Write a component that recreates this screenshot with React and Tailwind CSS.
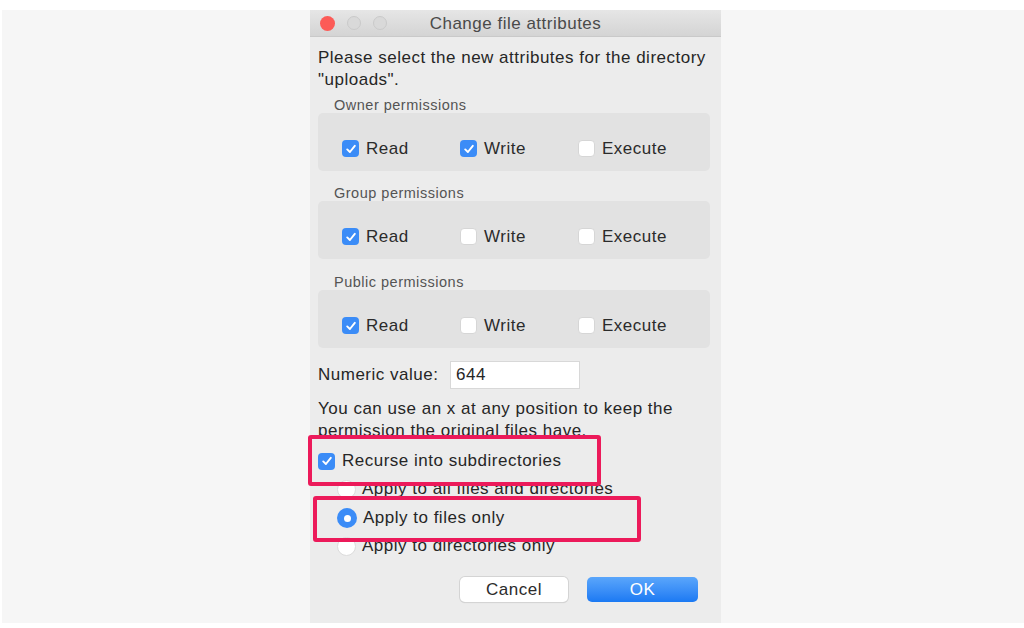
import React from 'react';

const font = { fontFamily: '"Liberation Sans", Arial, sans-serif' };

function Check({ on }) {
    if (!on) {
        return <span className="w-[17px] h-[17px] rounded-[4px] bg-white border border-[#d6d6d6] shrink-0" />;
    }
    return (
        <span className="w-[17px] h-[17px] rounded-[4px] bg-[#3b8cf7] flex items-center justify-center shrink-0">
            <svg width="12" height="12" viewBox="0 0 12 12">
                <path d="M2.2 6.4 L4.9 9 L9.8 2.8" fill="none" stroke="white" strokeWidth="1.9" strokeLinecap="round" strokeLinejoin="round" />
            </svg>
        </span>
    );
}

function Radio({ on }) {
    if (!on) {
        return <span className="w-[19px] h-[19px] rounded-full bg-white border border-[#dcdcdc] shrink-0" />;
    }
    return (
        <span className="w-[20px] h-[20px] rounded-full bg-[#3b8cf7] flex items-center justify-center shrink-0">
            <span className="w-[7px] h-[7px] rounded-full bg-white" />
        </span>
    );
}

function PermGroup({ label, read, write, exec, gap }) {
    const items = [
        ['Read', read],
        ['Write', write],
        ['Execute', exec],
    ];
    return (
        <div className={gap}>
            <div className="ml-[16px] text-[14.5px] leading-[16px] text-[#545454]">{label}</div>
            <div className="w-[392px] h-[58px] rounded-[5px] bg-[#e2e2e2] pt-[13px] pl-[24px] flex items-center">
                {items.map(([name, on]) => (
                    <div key={name} className="w-[118px] flex items-center gap-[7px] text-[17px] text-[#2b2b2b]">
                        <Check on={on} />
                        <span>{name}</span>
                    </div>
                ))}
            </div>
        </div>
    );
}

export default function App() {
    return (
        <div className="w-[1024px] h-[628px] bg-white pt-[10px] overflow-hidden tracking-[0.5px]" style={font}>
            <div className="ml-[2px] h-[613px] bg-[#f6f6f6] pl-[308px]">
                {/* ventana */}
                <div className="relative w-[411px] h-[613px] bg-[#ececec] flex flex-col">
                    <div className="h-[27px] bg-gradient-to-b from-[#e6e6e6] to-[#d4d4d4] border-b border-[#c9c9c9] flex items-center px-[10px]">
                        <div className="w-[80px] flex items-center gap-[12px]">
                            <span className="w-[15px] h-[15px] rounded-full bg-[#fc5b57]" />
                            <span className="w-[14px] h-[14px] rounded-full bg-[#d9d9d9] border border-[#cacaca]" />
                            <span className="w-[14px] h-[14px] rounded-full bg-[#d9d9d9] border border-[#cacaca]" />
                        </div>
                        <div className="flex-1 text-center text-[17px] text-[#4a4a4a] pt-[1px]">Change file attributes</div>
                        <div className="w-[80px]" />
                    </div>

                    <div className="px-[8px] pt-[10px] text-[#262626]">
                        <p className="text-[17px] leading-[22px] whitespace-nowrap">
                            Please select the new attributes for the directory
                            <br />
                            "uploads".
                        </p>

                        <PermGroup label="Owner permissions" read write gap="mt-[6px]" />
                        <PermGroup label="Group permissions" read gap="mt-[14px]" />
                        <PermGroup label="Public permissions" read gap="mt-[15px]" />

                        <div className="mt-[13px] flex items-center">
                            <span className="w-[132px] text-[17px]">Numeric value:</span>
                            <div className="w-[130px] h-[28px] bg-white border border-[#d8d8d8] flex items-center px-[5px] text-[17px]">644</div>
                        </div>

                        <p className="mt-[9px] text-[17px] leading-[22px] whitespace-nowrap">You can use an x at any position to keep the</p>
                        <div className="h-[15px] overflow-hidden">
                            <p className="text-[17px] leading-[22px]">permission the original files have.</p>
                        </div>

                        <div className="mt-[12px] h-[28px] flex items-center gap-[7px] text-[17px]">
                            <Check on />
                            <span>Recurse into subdirectories</span>
                        </div>
                        <div className="h-[21px] overflow-hidden">
                            <div className="h-[28px] pl-[19px] flex items-center gap-[6px] text-[17px]">
                                <Radio />
                                <span>Apply to all files and directories</span>
                            </div>
                        </div>
                        <div className="mt-[8px] h-[28px] pl-[19px] flex items-center gap-[6px] text-[17px]">
                            <Radio on />
                            <span>Apply to files only</span>
                        </div>
                        <div className="h-[28px] pl-[19px] flex items-center gap-[6px] text-[17px]">
                            <Radio />
                            <span>Apply to directories only</span>
                        </div>

                        <div className="mt-[17px] flex justify-end gap-[19px] pr-[15px]">
                            <button className="w-[108px] h-[25px] bg-white rounded-[5px] shadow-[0_0_0_1px_#d4d4d4,0_1px_1px_rgba(0,0,0,0.15)] text-[17px] text-[#2b2b2b] tracking-[0.5px]">Cancel</button>
                            <button className="w-[111px] h-[25px] rounded-[5px] bg-gradient-to-b from-[#5aa6fb] to-[#1a79f3] text-[17px] text-white tracking-[0.5px]">OK</button>
                        </div>
                    </div>

                    {/* marcas rojas superpuestas */}
                    <div className="absolute left-[-2px] top-[425px] w-[293px] h-[51px] border-[4px] border-[#ec1a5a] rounded-[3px]" />
                    <div className="absolute left-[3px] top-[486px] w-[328px] h-[46px] border-[4px] border-[#ec1a5a] rounded-[3px]" />
                </div>
            </div>
        </div>
    );
}
